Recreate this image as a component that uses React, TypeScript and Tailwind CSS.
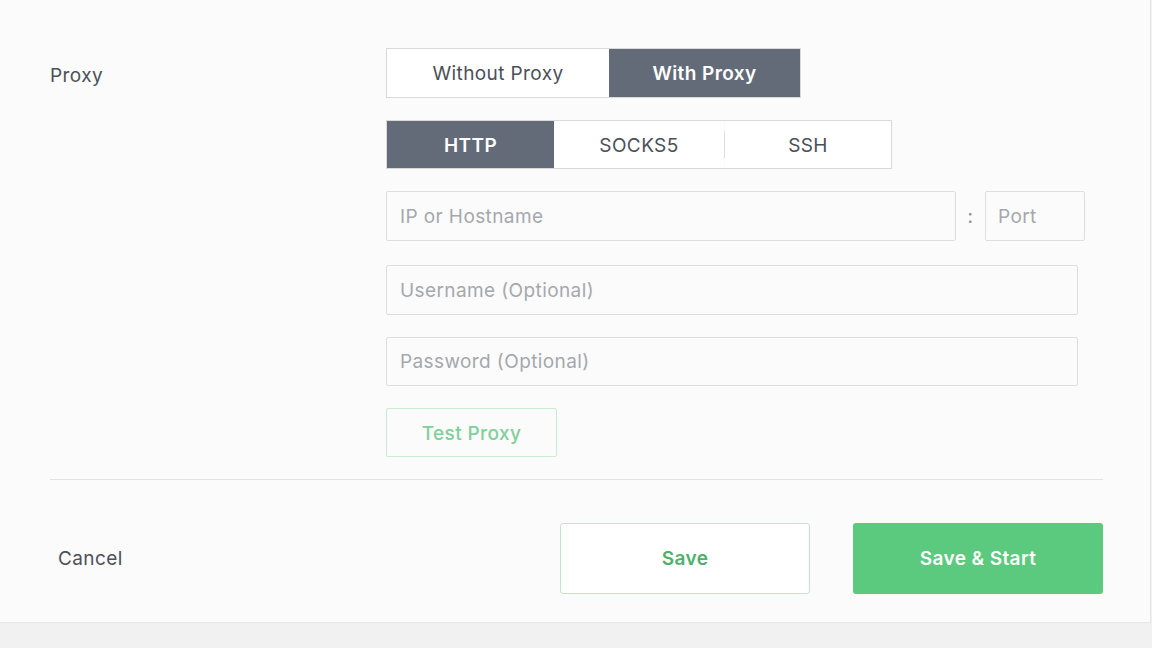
import React from 'react';

const font = { fontFamily: 'Inter, "Liberation Sans", sans-serif' };

const ProxyForm = () => {
  return (
    <div className="min-h-[648px] w-full bg-[#f1f1f1] tracking-[0.4px]" style={font}>
      <div className="h-[623px] w-[1151px] border-r border-b border-[#e6e6e6] bg-[#fbfbfb] px-[50px] pt-[48px]">
        <div className="flex">
          <div className="w-[336px] pt-[14px] text-[19px] text-[#4b5058]">Proxy</div>

          <div className="flex flex-col">
            <div className="flex h-[50px] w-[415px] border border-[#d9d9d9] pt-[2px] text-[19px]">
              <div className="-mt-[2px] flex w-[222px] items-center justify-center bg-white pt-[2px] text-[#4b5058]">Without Proxy</div>
              <div className="-mt-[2px] flex flex-1 items-center justify-center bg-[#646b78] pt-[2px] font-semibold text-white">With Proxy</div>
            </div>

            <div className="mt-[22px] flex h-[49px] w-[506px] border border-[#d9d9d9] text-[19px]">
              <div className="flex w-[167px] items-center justify-center bg-[#646b78] pt-[3px] font-semibold text-white">HTTP</div>
              <div className="flex w-[170px] items-center justify-center bg-white pt-[3px] text-[#4b5058]">SOCKS5</div>
              <div className="my-[10px] w-px bg-[#dcdcdc]" />
              <div className="flex flex-1 items-center justify-center bg-white pt-[3px] text-[#4b5058]">SSH</div>
            </div>

            <div className="mt-[22px] flex items-center">
              <div className="flex h-[50px] w-[570px] items-center rounded-[2px] border border-[#dedede] bg-[#fbfbfb] px-[13px] pt-[2px] text-[19px] text-[#a4a8ae]">
                IP or Hostname
              </div>
              <div className="w-[29px] pt-[2px] text-center text-[19px] text-[#8a8f96]">:</div>
              <div className="flex h-[50px] w-[100px] items-center rounded-[2px] border border-[#dedede] px-[12px] pt-[2px] text-[19px] text-[#a4a8ae]">
                Port
              </div>
            </div>

            <div className="mt-[24px] flex h-[50px] w-[692px] items-center rounded-[2px] border border-[#dedede] px-[13px] pt-[2px] text-[19px] text-[#a4a8ae]">
              Username (Optional)
            </div>

            <div className="mt-[22px] flex h-[49px] w-[692px] items-center rounded-[2px] border border-[#dedede] px-[13px] pt-[2px] text-[19px] text-[#a4a8ae]">
              Password (Optional)
            </div>

            <div className="mt-[22px] flex h-[49px] w-[171px] items-center justify-center rounded-[2px] border border-[#c9ebd3] pt-[3px] text-[19px] font-medium text-[#7fd09a]">
              Test Proxy
            </div>
          </div>
        </div>

        <div className="mt-[22px] h-px w-[1053px] bg-[#e3e3e3]" />

        <div className="mt-[43px] flex w-[1053px] items-center">
          <div className="pl-[8px] pt-[2px] text-[19px] text-[#4b5058]">Cancel</div>
          <div className="ml-auto flex gap-[43px]">
            <div className="flex h-[71px] w-[250px] items-center justify-center rounded-[3px] border border-[#bfe6ca] bg-white pt-[2px] text-[19px] font-semibold text-[#4fb06c]">
              Save
            </div>
            <div className="flex h-[71px] w-[250px] items-center justify-center rounded-[3px] bg-[#5bc97e] pt-[2px] text-[19px] font-semibold text-white">
              Save &amp; Start
            </div>
          </div>
        </div>
      </div>
    </div>
  );
};

export default function App() {
  return <ProxyForm />;
}
